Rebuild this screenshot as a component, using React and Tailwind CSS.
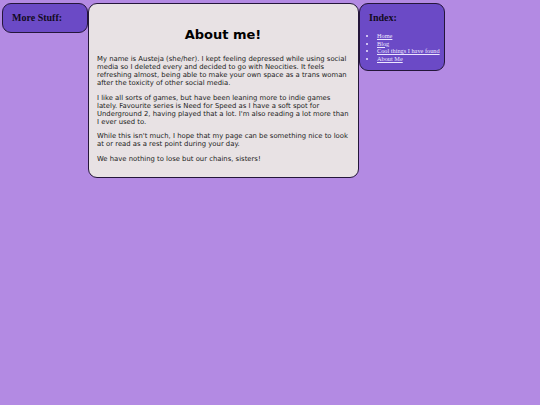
import React from "react";

const links = ["Home", "Blog", "Cool things I have found", "About Me"];

function Sidebar({ title, children }) {
  return (
    <div className="w-[86px] shrink-0 self-start rounded-[9px] border border-[#24163a] bg-[#6b4ac6] px-[9px] py-[8px]">
      <h2 className="font-['Liberation_Serif',serif] text-[10px] leading-[12px] font-bold text-[#120a22]">
        {title}
      </h2>
      {children}
    </div>
  );
}

export default function App() {
  return (
    <div className="min-h-[405px] w-full bg-[#b38ae3] pl-[2px] pt-[3px]">
      <div className="flex items-start">
        <Sidebar title="More Stuff:" />

        <div className="w-[271px] shrink-0 rounded-[9px] border border-[#24163a] bg-[#e8e2e4] pl-[8px] pr-[9px] pt-[23px] pb-[14px] font-['DejaVu_Sans',sans-serif] text-[#222]">
          <h1 className="mb-[12px] text-center text-[13px] leading-[16px] font-bold text-black">
            About me!
          </h1>
          <div className="space-y-[6.5px] text-[6.85px] leading-[8px]">
            <p>
              My name is Austeja (she/her). I kept feeling depressed while using
              social media so I deleted every and decided to go with Neocities.
              It feels refreshing almost, being able to make your own space as a
              trans woman after the toxicity of other social media.
            </p>
            <p>
              I like all sorts of games, but have been leaning more to indie
              games lately. Favourite series is Need for Speed as I have a soft
              spot for Underground 2, having played that a lot. I'm also reading
              a lot more than I ever used to.
            </p>
            <p>
              While this isn't much, I hope that my page can be something nice
              to look at or read as a rest point during your day.
            </p>
            <p>We have nothing to lose but our chains, sisters!</p>
          </div>
        </div>

        <Sidebar title="Index:">
          <ul className="mt-[8px] list-disc pl-[8px] font-['Liberation_Serif',serif] text-[6.3px] leading-[7.5px] text-[#ece6ff]">
            {links.map((l) => (
              <li key={l}>
                <a href="#" className="whitespace-nowrap underline">
                  {l}
                </a>
              </li>
            ))}
          </ul>
        </Sidebar>
      </div>
    </div>
  );
}
